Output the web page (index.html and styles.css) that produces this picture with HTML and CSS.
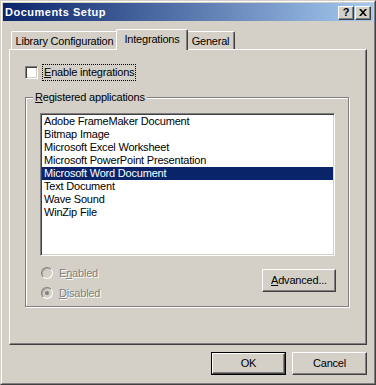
FILE: index.html
```html
<!DOCTYPE html>
<html>
<head>
<meta charset="utf-8">
<link rel="stylesheet" href="styles.css">
</head>
<body>
<div class="window">
  <div class="frame">
    <div class="titlebar">
      <span class="title">Documents Setup</span>
      <div class="tbtns">
        <span class="tbtn help">?</span>
        <span class="tbtn close">
          <svg width="8" height="7" viewBox="0 0 8 7"><path d="M0 0h2l2 2.2 2-2.2h2L5 3.5 8 7H6L4 4.8 2 7H0l3-3.5z" fill="#000"/></svg>
        </span>
      </div>
    </div>
    <div class="content">
      <div class="tabs">
        <div class="tab t1">Library Configuration</div>
        <div class="tab t2 active">Integrations</div>
        <div class="tab t3">General</div>
      </div>
      <div class="panel">
        <div class="check-row">
          <span class="checkbox"></span>
          <span class="focus"><u>E</u>nable integrations</span>
        </div>
        <div class="group">
          <div class="group-label"><u>R</u>egistered applications</div>
          <div class="listbox">
            <div class="item">Adobe FrameMaker Document</div>
            <div class="item">Bitmap Image</div>
            <div class="item">Microsoft Excel Worksheet</div>
            <div class="item">Microsoft PowerPoint Presentation</div>
            <div class="item selected">Microsoft Word Document</div>
            <div class="item">Text Document</div>
            <div class="item">Wave Sound</div>
            <div class="item">WinZip File</div>
          </div>
          <div class="group-bottom">
            <div class="radios">
              <div class="radio-row"><span class="radio"></span><span class="dis">E<u>n</u>abled</span></div>
              <div class="radio-row"><span class="radio checked"></span><span class="dis"><u>D</u>isabled</span></div>
            </div>
            <div class="btn adv"><span><u>A</u>dvanced...</span></div>
          </div>
        </div>
      </div>
      <div class="buttons">
        <div class="default"><div class="btn ok">OK</div></div>
        <div class="btn cancel">Cancel</div>
      </div>
    </div>
  </div>
</div>
</body>
</html>
```
FILE: styles.css
```css
* { box-sizing: border-box; }
html, body { margin: 0; padding: 0; background: #d4d0c8; }
body {
  font-family: "Liberation Sans", Arial, sans-serif;
  font-size: 11px;
  letter-spacing: -0.2px;
  color: #000;
}
u { text-decoration: underline; text-underline-offset: 1px; }

.window {
  width: 376px;
  height: 385px;
  border: 1px solid;
  border-color: #d4d0c8 #404040 #404040 #d4d0c8;
  background: #d4d0c8;
}
.frame {
  height: 100%;
  border: 1px solid;
  border-color: #fff #808080 #808080 #fff;
  padding: 1px;
}
.titlebar {
  height: 18px;
  background: linear-gradient(to right, #0a246a, #a6caf0);
  display: flex;
  align-items: center;
  justify-content: space-between;
  padding: 0 2px 0 2px;
}
.title {
  color: #fff;
  font-weight: bold;
  font-size: 11px;
  line-height: 18px;
  letter-spacing: 0.5px;
}
.tbtns { display: flex; gap: 1px; margin-top: 1px; }
.tbtn {
  width: 16px;
  height: 14px;
  background: #d4d0c8;
  border: 1px solid;
  border-color: #fff #404040 #404040 #fff;
  box-shadow: inset -1px -1px 0 #808080;
  display: flex;
  align-items: center;
  justify-content: center;
  letter-spacing: 0;
}
.tbtn.help { font-weight: bold; font-size: 11px; line-height: 12px; padding-bottom: 1px; }
.tbtn.close svg { display: block; margin-bottom: 1px; }

.content { padding: 0 6px 0 6px; }

.tabs {
  display: flex;
  align-items: flex-end;
  height: 29px;
  padding-left: 2px;
  position: relative;
  z-index: 2;
  margin-bottom: -1px;
}
.tab {
  height: 18px;
  border-top: 1px solid #fff;
  border-left: 1px solid #fff;
  border-right: 1px solid #404040;
  box-shadow: inset -1px 0 0 #808080;
  border-radius: 2px 2px 0 0;
  text-align: center;
  line-height: 16px;
  padding-top: 1px;
  background: #d4d0c8;
  white-space: nowrap;
}
.t1 { width: 107px; margin-bottom: 1px; }
.t3 { width: 49px; margin-bottom: 1px; }
.t2.active {
  width: 72px;
  height: 21px;
  margin: 0 -2px;
  position: relative;
  z-index: 3;
  padding-top: 1px;
}

.panel {
  height: 296px;
  border: 1px solid;
  border-color: #fff #404040 #404040 #fff;
  box-shadow: inset -1px -1px 0 #808080;
  padding: 14px 17px 0 15px;
}
.check-row {
  display: flex;
  align-items: center;
  height: 17px;
}
.checkbox {
  flex: none;
  width: 13px;
  height: 13px;
  background: #fff;
  border: 1px solid;
  border-color: #808080 #fff #fff #808080;
  box-shadow: inset 1px 1px 0 #404040, inset -1px -1px 0 #d4d0c8;
}
.focus {
  margin-left: 4px;
  border: 1px dotted #000;
  padding: 0 1px 1px 1px;
  line-height: 14px;
  height: 17px;
  white-space: nowrap;
}

.group {
  margin-top: 16px;
  height: 210px;
  border: 1px solid #808080;
  box-shadow: inset 1px 1px 0 #fff, 1px 1px 0 #fff;
  padding: 0 12px 0 14px;
  width: 324px;
}
.group-label {
  width: max-content;
  margin-top: -7px;
  margin-left: -7px;
  padding: 0 2px 0 2px;
  background: #d4d0c8;
  line-height: 13px;
  height: 13px;
  white-space: nowrap;
}
.listbox {
  margin-top: 9px;
  width: 295px;
  height: 143px;
  background: #fff;
  border: 1px solid;
  border-color: #808080 #fff #fff #808080;
  box-shadow: inset 1px 1px 0 #404040, inset -1px -1px 0 #d4d0c8;
  padding: 1px 1px;
}
.item {
  height: 13px;
  line-height: 13px;
  padding-left: 2px;
  white-space: nowrap;
}
.item.selected { background: #0a246a; color: #fff; }

.group-bottom {
  display: flex;
  justify-content: space-between;
  align-items: flex-start;
  margin-top: 7px;
}
.radios { display: flex; flex-direction: column; padding-left: 1px; }
.radio-row {
  display: flex;
  align-items: center;
  height: 20px;
  gap: 6px;
}
.radio {
  width: 12px;
  height: 12px;
  border-radius: 50%;
  background: #d4d0c8;
  border: 1px solid;
  border-color: #808080 #fff #fff #808080;
  box-shadow: inset 1px 1px 0 #b0aca4;
  position: relative;
}
.radio.checked::after {
  content: "";
  position: absolute;
  left: 3px;
  top: 3px;
  width: 4px;
  height: 4px;
  border-radius: 50%;
  background: #808080;
}
.dis { color: #808080; text-shadow: 1px 1px 0 #fff; line-height: 13px; }

.btn {
  background: #d4d0c8;
  border: 1px solid;
  border-color: #fff #404040 #404040 #fff;
  box-shadow: inset -1px -1px 0 #808080;
  display: flex;
  align-items: center;
  justify-content: center;
  line-height: 13px;
}
.adv { width: 74px; height: 23px; margin-top: 6px; }

.buttons {
  display: flex;
  justify-content: flex-end;
  gap: 6px;
  margin-top: 7px;
}
.default { border: 1px solid #000; width: 75px; height: 23px; }
.ok { width: 73px; height: 21px; }
.cancel { width: 75px; height: 23px; }
```
